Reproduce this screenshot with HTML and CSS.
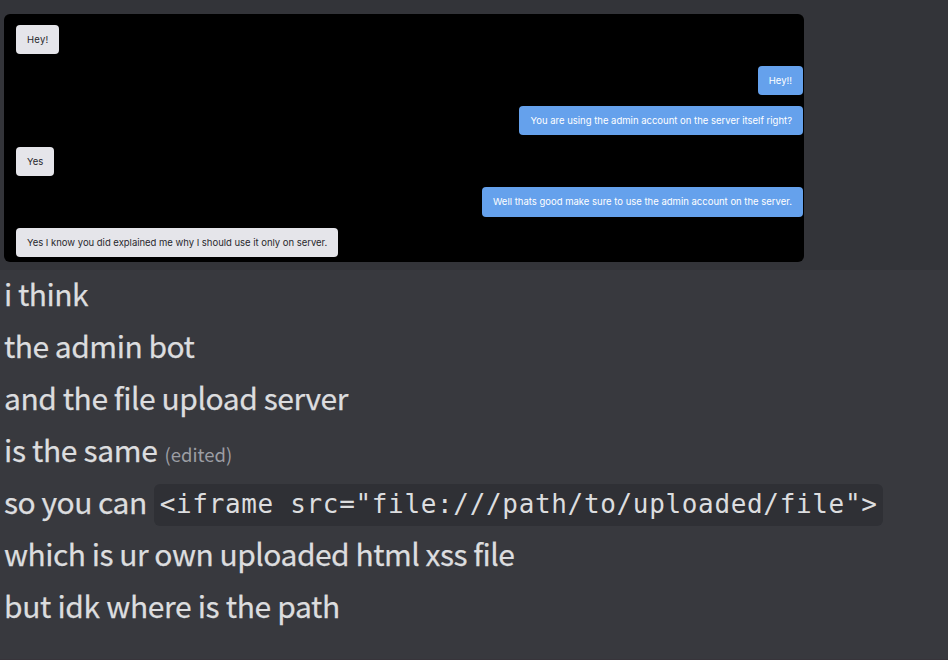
FILE: index.html
```html
<!DOCTYPE html>
<html lang="en">
<head>
<meta charset="utf-8">
<title>Chat</title>
<link rel="stylesheet" href="styles.css">
</head>
<body>
<section class="attachment">
  <div class="chat">
    <div class="bubble hey">Hey!</div>
    <div class="bubble sent">Hey!!</div>
    <div class="bubble sent">You are using the admin account on the server itself right?</div>
    <div class="bubble">Yes</div>
    <div class="bubble sent">Well thats good make sure to use the admin account on the server.</div>
    <div class="bubble know">Yes I know you did explained me why I should use it only on server.</div>
  </div>
</section>
<main class="messages">
  <p><span>i think</span></p>
  <p><span>the admin bot</span></p>
  <p class="loose"><span>and the file upload server</span></p>
  <p class="looser"><span>is the same</span><small>(edited)</small></p>
  <p><span>so you can</span><code>&lt;iframe src="file:///path/to/uploaded/file"&gt;</code></p>
  <p><span>which is ur own uploaded html xss file</span></p>
  <p class="looser"><span>but idk where is the path</span></p>
</main>
</body>
</html>
```
FILE: styles.css
```css
* { box-sizing: border-box; }
body {
  margin: 0;
  height: 660px;
  overflow: hidden;
  background: #38393e;
  color: #dcdddf;
  font-family: "Noto Sans CJK JP", "Noto Sans", sans-serif;
}
.attachment {
  height: 270px;
  padding: 14px 4px 8px;
  background: #333439;
}
.chat {
  display: flex;
  flex-direction: column;
  align-items: flex-start;
  gap: 11.25px;
  width: 800px;
  height: 248px;
  padding: 11.1px 1px 0 12px;
  border-radius: 6px;
  background: #000;
}
.bubble {
  flex: none;
  height: 29.3px;
  padding: 0 11px;
  border-radius: 4px;
  background: #e5e5ea;
  color: #28282d;
  font: 9.5px/30.5px Inter, sans-serif;
  white-space: nowrap;
}
.hey {
  letter-spacing: 0.25px;
}
.know {
  letter-spacing: -0.02px;
}
.sent {
  align-self: flex-end;
  background: #65a1ec;
  color: #fff;
}
.messages {
  height: 390px;
  border-bottom: 1px solid #37343a;
}
.messages p {
  display: flex;
  align-items: center;
  height: 52px;
  margin: 0;
  padding-left: 4px;
  font-size: 30px;
  line-height: 47px;
  letter-spacing: -0.5px;
  white-space: nowrap;
  -webkit-text-stroke: 0.25px;
}
.messages .loose {
  letter-spacing: -0.44px;
}
.messages .looser {
  letter-spacing: -0.34px;
}
.messages span {
  height: 52px;
}
small {
  margin: 4px 0 0 7px;
  color: #9c9ea4;
  font-size: 18.5px;
  line-height: 44px;
  letter-spacing: 0;
  -webkit-text-stroke: 0;
}
code {
  height: 42px;
  margin: 2px 0 0 7px;
  padding: 0 5px 0 6px;
  border-radius: 6px;
  background: #2f3035;
  font: 26px/40px "DejaVu Sans Mono", monospace;
  letter-spacing: 0.66px;
  -webkit-text-stroke: 0;
}
```
